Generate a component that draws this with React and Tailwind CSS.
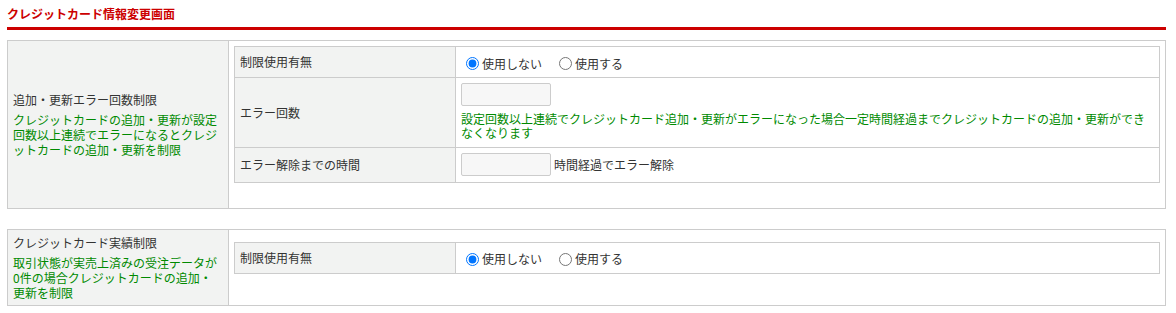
import React from 'react';

function RadioGroup({ name }) {
    return (
        <div className="flex items-center h-[30px] pt-[3px]">
            <label className="flex items-center mr-[12px]">
                <input type="radio" name={name} defaultChecked className="w-[13px] h-[13px] ml-[5px] mr-[3px]" />
                <span>使用しない</span>
            </label>
            <label className="flex items-center">
                <input type="radio" name={name} className="w-[13px] h-[13px] ml-[5px] mr-[3px]" />
                <span>使用する</span>
            </label>
        </div>
    );
}

function Row({ label, children, first }) {
    return (
        <div className={first ? 'flex' : 'flex border-t border-[#ccc]'}>
            <div className="w-[221px] shrink-0 border-r border-[#ccc] bg-[#f2f3f2] pl-[5px] flex items-center">
                {label}
            </div>
            <div className="flex-1 px-[5px]">{children}</div>
        </div>
    );
}

function Section({ title, note, children }) {
    return (
        <div className="flex w-[1159px] border border-[#ccc]">
            <div className="w-[221px] shrink-0 border-r border-[#ccc] bg-[#f2f3f2] pl-[5px] pr-[6px] py-[5px] flex flex-col justify-center">
                <p className="leading-[15px]">{title}</p>
                <p className="mt-[5px] leading-[15px] text-[#008a00]">{note}</p>
            </div>
            <div className="flex-1 px-[5px] py-[5px] flex flex-col justify-center">
                <div className="border border-[#ccc] mb-[20px]">{children}</div>
            </div>
        </div>
    );
}

const inputCls = 'block w-[90px] h-[23px] bg-[#f7f7f7] border border-[#ccc] rounded-[2px]';

export default function App() {
    return (
        <div className="pl-[7px] pt-[5px] text-[12px] text-[#333] font-[family-name:'Noto_Sans_CJK_JP',sans-serif] bg-white">
            <div className="w-[1159px] pb-[4px] border-b-[3px] border-[#cc0000]">
                <h1 className="leading-[18px] font-bold text-[#cc0000]">クレジットカード情報変更画面</h1>
            </div>

            <div className="mt-[10px]">
                <Section
                    title="追加・更新エラー回数制限"
                    note="クレジットカードの追加・更新が設定回数以上連続でエラーになるとクレジットカードの追加・更新を制限"
                >
                    <Row label="制限使用有無" first>
                        <RadioGroup name="errLimit" />
                    </Row>
                    <Row label="エラー回数">
                        <div className="pt-[5px] pb-[7px]">
                            <input type="text" className={inputCls} />
                            <p className="mt-[6px] leading-[14px] text-[#008a00]">
                                設定回数以上連続でクレジットカード追加・更新がエラーになった場合一定時間経過までクレジットカードの追加・更新ができなくなります
                            </p>
                        </div>
                    </Row>
                    <Row label="エラー解除までの時間">
                        <div className="flex items-center pt-[5px] pb-[6px]">
                            <input type="text" className={inputCls} />
                            <span className="ml-[3px]">時間経過でエラー解除</span>
                        </div>
                    </Row>
                </Section>
            </div>

            <div className="mt-[20px]">
                <Section
                    title="クレジットカード実績制限"
                    note="取引状態が実売上済みの受注データが0件の場合クレジットカードの追加・更新を制限"
                >
                    <Row label="制限使用有無" first>
                        <RadioGroup name="salesLimit" />
                    </Row>
                </Section>
            </div>
        </div>
    );
}
